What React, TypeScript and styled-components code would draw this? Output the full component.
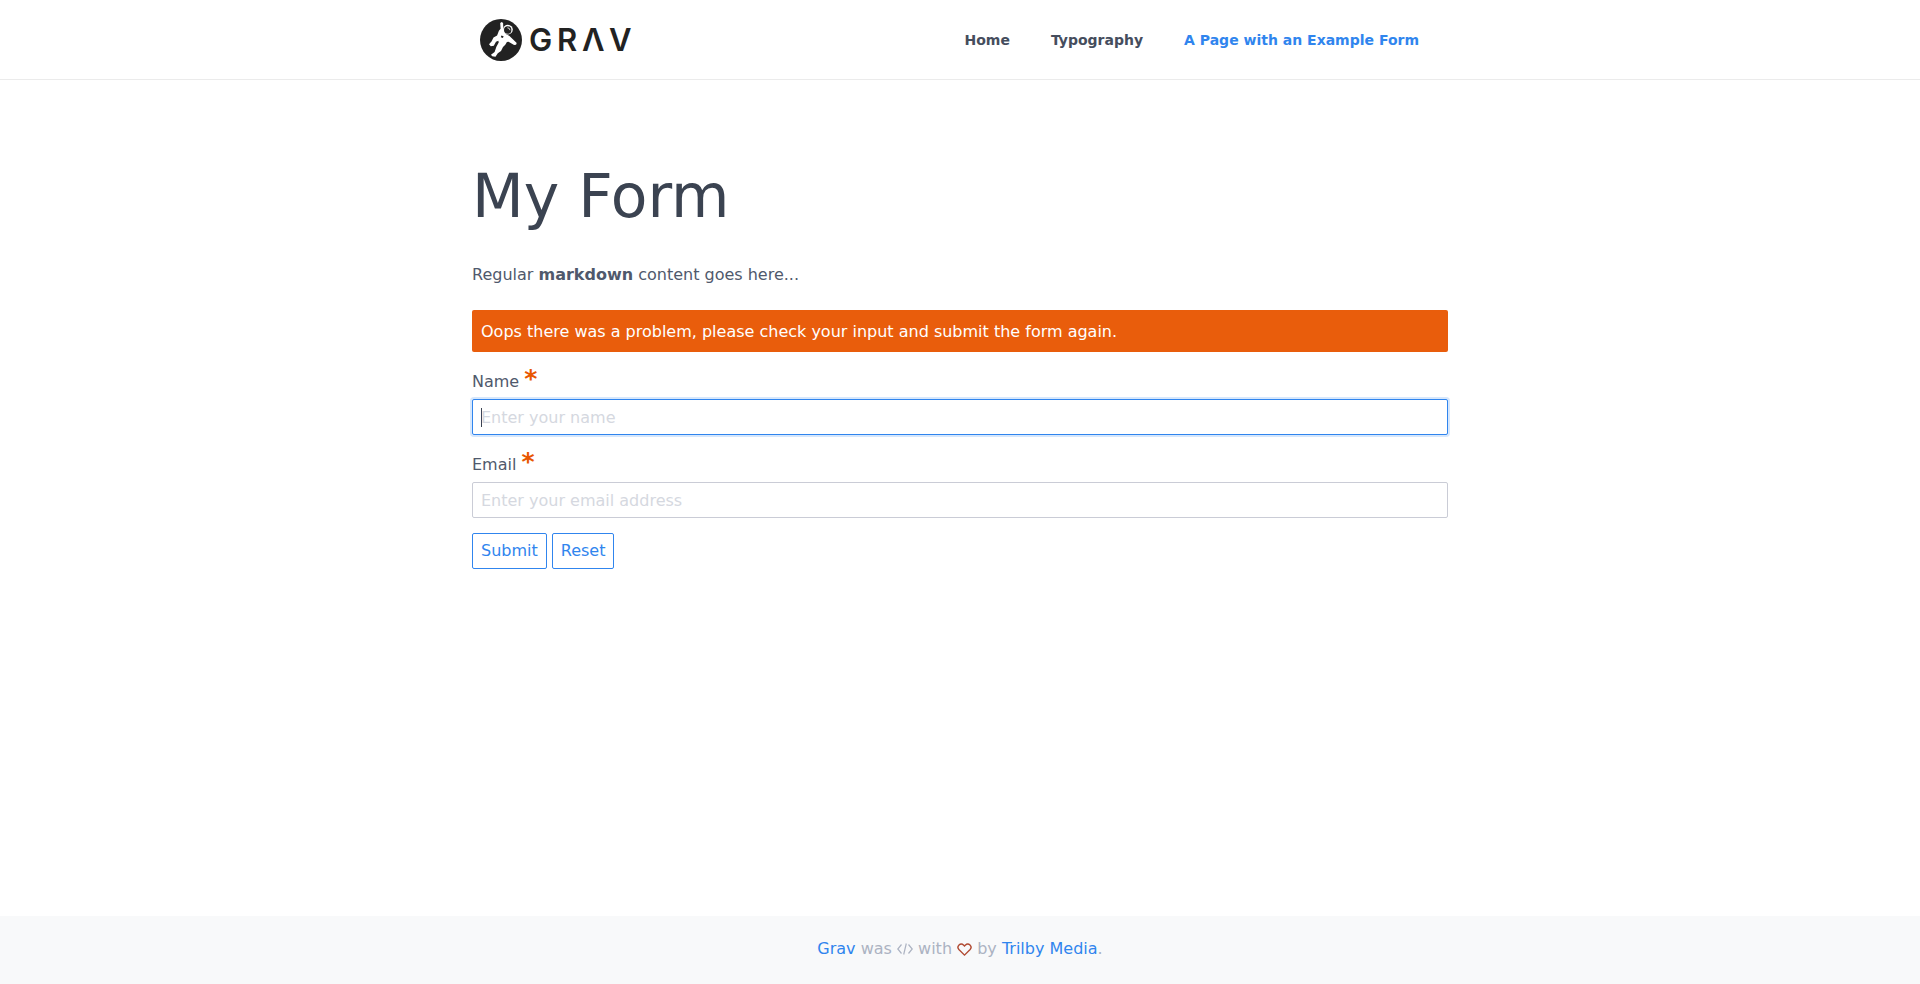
import React from 'react';
import styled, { createGlobalStyle } from 'styled-components';

const GlobalStyle = createGlobalStyle`
  *, *::before, *::after { box-sizing: border-box; }
  body {
    margin: 0;
    background: #fff;
    color: #50596c;
    font-family: "DejaVu Sans", sans-serif;
    font-size: 16px;
    line-height: 28px;
  }
`;

const Page = styled.div`
  display: flex;
  flex-direction: column;
  min-height: 100vh;
`;

const Header = styled.header`
  border-bottom: 1px solid #ebebeb;
`;

const Container = styled.div`
  width: 100%;
  max-width: 992px;
  margin: 0 auto;
  padding: 0 8px;
`;

const HeaderBar = styled(Container)`
  display: flex;
  align-items: center;
  justify-content: space-between;
  min-height: 79px;
`;

const LogoLink = styled.a`
  display: flex;
  padding-left: 8px;
`;

const Nav = styled.nav`
  display: flex;
  gap: 41px;
  padding-right: 29px;
`;

const NavLink = styled.a<{ $active?: boolean }>`
  color: ${(p) => (p.$active ? '#3085ee' : '#454d5d')};
  font-size: 14px;
  font-weight: 700;
  text-decoration: none;
`;

const Main = styled.main`
  flex: 1;
  padding: 80px 0 48px;
`;

const Title = styled.h1`
  margin: 0 0 29px;
  color: #3b4351;
  font-size: 60px;
  font-weight: 400;
  line-height: 72px;
`;

const Paragraph = styled.p`
  margin: 0 0 21px;
`;

const Alert = styled.div`
  margin-bottom: 15px;
  padding: 8px 9px 6px;
  border-radius: 2px;
  background: #e95d0c;
  color: #fff;
`;

const Field = styled.div`
  margin-bottom: 15px;
`;

const Label = styled.label`
  display: flex;
  gap: 5px;
  height: 32px;
  padding-top: 1px;
`;

const Required = styled.span`
  color: #e85600;
  font-size: 25px;
  font-weight: 700;
  line-height: 22px;
`;

const TextInput = styled.input`
  display: block;
  width: 100%;
  height: 36px;
  padding: 4px 8px;
  border: 1px solid #caccd6;
  border-radius: 2px;
  outline: 0;
  background: #fff;
  color: #3b4351;
  font: inherit;

  &::placeholder { color: #d5d8e0; opacity: 1; }
  &:focus {
    border-color: #3085ee;
    box-shadow: 0 0 0 2px rgba(48, 133, 238, 0.2);
  }
  &:focus:placeholder-shown {
    background: linear-gradient(#3b4351, #3b4351) 8px center / 1px 19px no-repeat #fff;
    caret-color: transparent;
  }
`;

const Actions = styled.div`
  display: flex;
  gap: 5px;
`;

const Button = styled.button`
  height: 36px;
  padding: 0 8px;
  border: 1px solid #3085ee;
  border-radius: 2px;
  background: #fff;
  color: #3085ee;
  font: inherit;
  cursor: pointer;
`;

const Footer = styled.footer`
  padding: 19px 8px 21px;
  background: #f8f9fa;
  color: #acb3c2;
  text-align: center;

  a { color: #3085ee; text-decoration: none; }
  svg { vertical-align: -3px; }
`;

const LogoText = styled.text`
  fill: #222;
  font-family: Inter, sans-serif;
  font-size: 31px;
  font-weight: 600;
`;

const Logo = () => (
  <svg width="152" height="42" viewBox="0 0 152 42" role="img" aria-label="Grav">
    <circle cx="21" cy="21" r="21" fill="#222" />
    <g fill="#fff">
      <path d="M20.2 4l1.5-1.1 1.4 1.2.2 6.4 2.6 4.6 3.6 1.9 3.6 3.4 3.6 3.5-.6 1.9-2 .3-5.6-3.4-1.6.4-1.6 2.6-2.3 2.4-2 4-3.2 2.2-2.3 3.5-3.3-.5-1.2-1.6 3.6-2.6 1.8-5.4 2.3-4.2-.3-1.7-2.4 1-2.2 4-3 .4-1.8-2 2.5-2.6 2-4.2 3.6-2 1.8-4.6 1.7-2z" />
      <circle cx="27.9" cy="10.6" r="4.9" />
    </g>
    <circle cx="27.7" cy="11" r="3.7" fill="#222" />
    <path d="M27.4 8.8q2.4 0 2.6 2.4" fill="none" stroke="#fff" strokeWidth=".8" />
    <path d="M21.4 16.4l2.2.9-.7 1.7-2.1-.7z" fill="#222" />
    <LogoText y="32" x="49 77 102 129">GRΛV</LogoText>
  </svg>
);

const CodeIcon = () => (
  <svg width="16" height="16" viewBox="0 0 16 16" fill="none" stroke="currentColor" strokeWidth="1.2" aria-hidden="true">
    <path d="M4.5 3.5L.8 8l3.7 4.5M11.5 3.5L15.2 8l-3.7 4.5M9.3 2.5l-2.6 11" />
  </svg>
);

const HeartIcon = () => (
  <svg width="15" height="15" viewBox="0 0 16 16" fill="none" stroke="#b04a32" strokeWidth="1.5" aria-hidden="true">
    <path d="M8 14L2 8C-.9 4.8 3.6 0 7.2 3.4L8 4.2l.8-.8C12.4 0 16.9 4.8 14 8z" />
  </svg>
);

type FieldProps = {
  id: string;
  label: string;
  type: string;
  placeholder: string;
  autoFocus?: boolean;
};

const FormField = ({ id, label, ...input }: FieldProps) => (
  <Field>
    <Label htmlFor={id}>
      {label}
      <Required>*</Required>
    </Label>
    <TextInput id={id} name={id} {...input} />
  </Field>
);

export default function App() {
  return (
    <Page>
      <GlobalStyle />
      <Header>
        <HeaderBar>
          <LogoLink href="#">
            <Logo />
          </LogoLink>
          <Nav>
            <NavLink href="#">Home</NavLink>
            <NavLink href="#">Typography</NavLink>
            <NavLink href="#" $active>A Page with an Example Form</NavLink>
          </Nav>
        </HeaderBar>
      </Header>
      <Main>
        <Container>
          <Title>My Form</Title>
          <Paragraph>
            Regular <strong>markdown</strong> content goes here...
          </Paragraph>
          <Alert role="alert">
            Oops there was a problem, please check your input and submit the form again.
          </Alert>
          <form noValidate onSubmit={(e) => e.preventDefault()}>
            <FormField id="name" label="Name" type="text" placeholder="Enter your name" autoFocus />
            <FormField id="email" label="Email" type="email" placeholder="Enter your email address" />
            <Actions>
              <Button type="submit">Submit</Button>
              <Button type="reset">Reset</Button>
            </Actions>
          </form>
        </Container>
      </Main>
      <Footer>
        <a href="#">Grav</a> was <CodeIcon /> with <HeartIcon /> by <a href="#">Trilby Media</a>.
      </Footer>
    </Page>
  );
}
